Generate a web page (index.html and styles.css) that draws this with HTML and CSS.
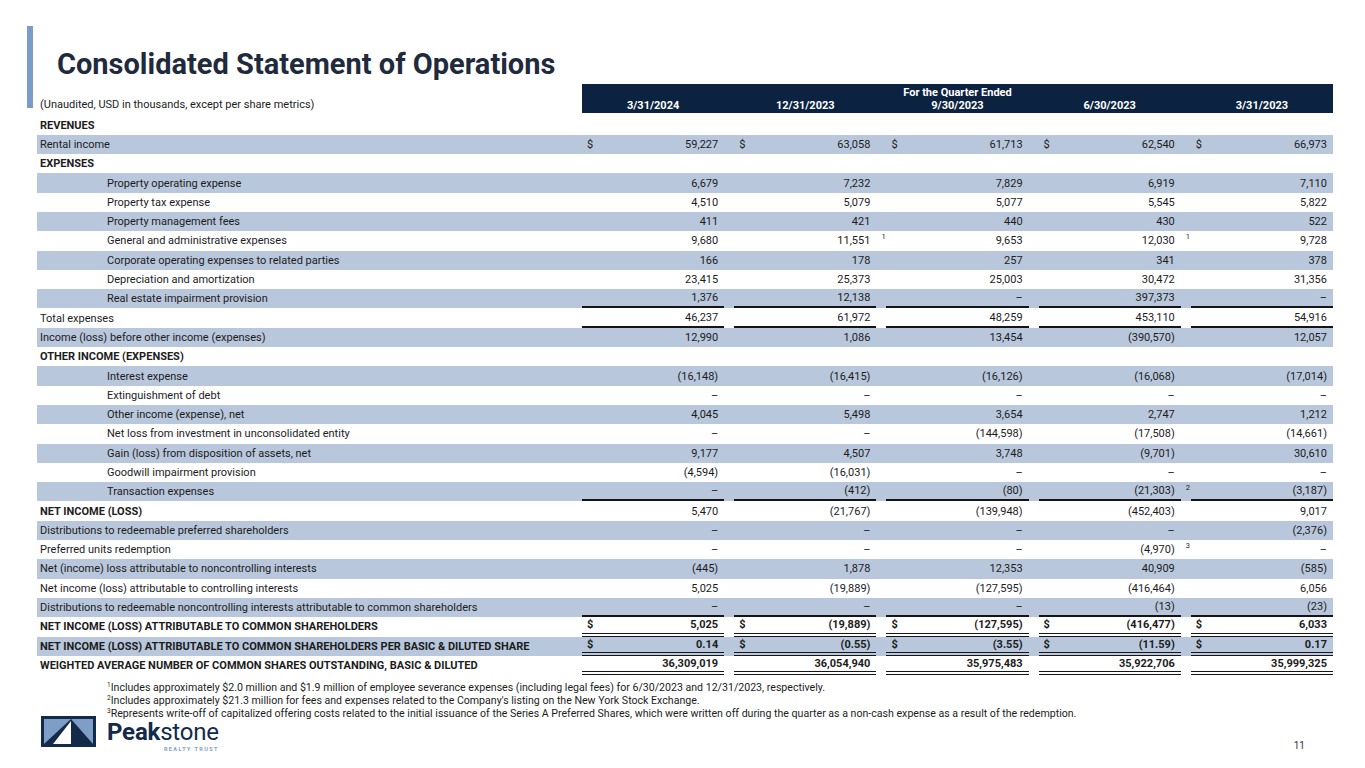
FILE: index.html
```html
<!DOCTYPE html>
<html lang="en">
<head>
<meta charset="utf-8">
<title>Consolidated Statement of Operations</title>
<link rel="stylesheet" href="styles.css">
</head>
<body>
<div class="slide">
  <h1 class="title">Consolidated Statement of Operations</h1>

  <div class="table">
    <div class="row head">
      <div class="label unaudited">(Unaudited, USD in thousands, except per share metrics)</div>
      <div class="headbar">
        <div class="qe">For the Quarter Ended</div>
        <div class="dates">
          <span>3/31/2024</span><span>12/31/2023</span><span>9/30/2023</span><span>6/30/2023</span><span>3/31/2023</span>
        </div>
      </div>
    </div>

    <div class="body">
      <div class="row"><div class="label sec">REVENUES</div></div>
      <div class="row band"><div class="label">Rental income</div>
        <div class="v d"><span>$</span><span>59,227</span></div><div class="v d"><span>$</span><span>63,058</span></div><div class="v d"><span>$</span><span>61,713</span></div><div class="v d"><span>$</span><span>62,540</span></div><div class="v d"><span>$</span><span>66,973</span></div></div>
      <div class="row"><div class="label sec">EXPENSES</div></div>
      <div class="row band"><div class="label ind">Property operating expense</div>
        <div class="v">6,679</div><div class="v">7,232</div><div class="v">7,829</div><div class="v">6,919</div><div class="v">7,110</div></div>
      <div class="row"><div class="label ind">Property tax expense</div>
        <div class="v">4,510</div><div class="v">5,079</div><div class="v">5,077</div><div class="v">5,545</div><div class="v">5,822</div></div>
      <div class="row band"><div class="label ind">Property management fees</div>
        <div class="v">411</div><div class="v">421</div><div class="v">440</div><div class="v">430</div><div class="v">522</div></div>
      <div class="row"><div class="label ind">General and administrative expenses</div>
        <div class="v">9,680</div><div class="v">11,551<span class="fn">1</span></div><div class="v">9,653</div><div class="v">12,030<span class="fn">1</span></div><div class="v">9,728</div></div>
      <div class="row band"><div class="label ind">Corporate operating expenses to related parties</div>
        <div class="v">166</div><div class="v">178</div><div class="v">257</div><div class="v">341</div><div class="v">378</div></div>
      <div class="row"><div class="label ind">Depreciation and amortization</div>
        <div class="v">23,415</div><div class="v">25,373</div><div class="v">25,003</div><div class="v">30,472</div><div class="v">31,356</div></div>
      <div class="row band ul"><div class="label ind">Real estate impairment provision</div>
        <div class="v">1,376</div><div class="v">12,138</div><div class="v">–</div><div class="v">397,373</div><div class="v">–</div></div>
      <div class="row ul"><div class="label">Total expenses</div>
        <div class="v">46,237</div><div class="v">61,972</div><div class="v">48,259</div><div class="v">453,110</div><div class="v">54,916</div></div>
      <div class="row band"><div class="label">Income (loss) before other income (expenses)</div>
        <div class="v">12,990</div><div class="v">1,086</div><div class="v">13,454</div><div class="v">(390,570)</div><div class="v">12,057</div></div>
      <div class="row"><div class="label sec">OTHER INCOME (EXPENSES)</div></div>
      <div class="row band"><div class="label ind">Interest expense</div>
        <div class="v">(16,148)</div><div class="v">(16,415)</div><div class="v">(16,126)</div><div class="v">(16,068)</div><div class="v">(17,014)</div></div>
      <div class="row"><div class="label ind">Extinguishment of debt</div>
        <div class="v">–</div><div class="v">–</div><div class="v">–</div><div class="v">–</div><div class="v">–</div></div>
      <div class="row band"><div class="label ind">Other income (expense), net</div>
        <div class="v">4,045</div><div class="v">5,498</div><div class="v">3,654</div><div class="v">2,747</div><div class="v">1,212</div></div>
      <div class="row"><div class="label ind">Net loss from investment in unconsolidated entity</div>
        <div class="v">–</div><div class="v">–</div><div class="v">(144,598)</div><div class="v">(17,508)</div><div class="v">(14,661)</div></div>
      <div class="row band"><div class="label ind">Gain (loss) from disposition of assets, net</div>
        <div class="v">9,177</div><div class="v">4,507</div><div class="v">3,748</div><div class="v">(9,701)</div><div class="v">30,610</div></div>
      <div class="row"><div class="label ind">Goodwill impairment provision</div>
        <div class="v">(4,594)</div><div class="v">(16,031)</div><div class="v">–</div><div class="v">–</div><div class="v">–</div></div>
      <div class="row band ul"><div class="label ind">Transaction expenses</div>
        <div class="v">–</div><div class="v">(412)</div><div class="v">(80)</div><div class="v">(21,303)<span class="fn">2</span></div><div class="v">(3,187)</div></div>
      <div class="row"><div class="label sec">NET INCOME (LOSS)</div>
        <div class="v">5,470</div><div class="v">(21,767)</div><div class="v">(139,948)</div><div class="v">(452,403)</div><div class="v">9,017</div></div>
      <div class="row band"><div class="label">Distributions to redeemable preferred shareholders</div>
        <div class="v">–</div><div class="v">–</div><div class="v">–</div><div class="v">–</div><div class="v">(2,376)</div></div>
      <div class="row"><div class="label">Preferred units redemption</div>
        <div class="v">–</div><div class="v">–</div><div class="v">–</div><div class="v">(4,970)<span class="fn">3</span></div><div class="v">–</div></div>
      <div class="row band"><div class="label">Net (income) loss attributable to noncontrolling interests</div>
        <div class="v">(445)</div><div class="v">1,878</div><div class="v">12,353</div><div class="v">40,909</div><div class="v">(585)</div></div>
      <div class="row"><div class="label">Net income (loss) attributable to controlling interests</div>
        <div class="v">5,025</div><div class="v">(19,889)</div><div class="v">(127,595)</div><div class="v">(416,464)</div><div class="v">6,056</div></div>
      <div class="row band ul"><div class="label">Distributions to redeemable noncontrolling interests attributable to common shareholders</div>
        <div class="v">–</div><div class="v">–</div><div class="v">–</div><div class="v">(13)</div><div class="v">(23)</div></div>
      <div class="row dbl strong"><div class="label sec">NET INCOME (LOSS) ATTRIBUTABLE TO COMMON SHAREHOLDERS</div>
        <div class="v d"><span>$</span><span>5,025</span></div><div class="v d"><span>$</span><span>(19,889)</span></div><div class="v d"><span>$</span><span>(127,595)</span></div><div class="v d"><span>$</span><span>(416,477)</span></div><div class="v d"><span>$</span><span>6,033</span></div></div>
      <div class="row band dbl strong"><div class="label sec">NET INCOME (LOSS) ATTRIBUTABLE TO COMMON SHAREHOLDERS PER BASIC &amp; DILUTED SHARE</div>
        <div class="v d"><span>$</span><span>0.14</span></div><div class="v d"><span>$</span><span>(0.55)</span></div><div class="v d"><span>$</span><span>(3.55)</span></div><div class="v d"><span>$</span><span>(11.59)</span></div><div class="v d"><span>$</span><span>0.17</span></div></div>
      <div class="row dbl strong"><div class="label sec">WEIGHTED AVERAGE NUMBER OF COMMON SHARES OUTSTANDING, BASIC &amp; DILUTED</div>
        <div class="v">36,309,019</div><div class="v">36,054,940</div><div class="v">35,975,483</div><div class="v">35,922,706</div><div class="v">35,999,325</div></div>
    </div>
  </div>

  <div class="notes">
    <p><sup>1</sup>Includes approximately $2.0 million and $1.9 million of employee severance expenses (including legal fees) for 6/30/2023 and 12/31/2023, respectively.</p>
    <p><sup>2</sup>Includes approximately $21.3 million for fees and expenses related to the Company's listing on the New York Stock Exchange.</p>
    <p><sup>3</sup>Represents write-off of capitalized offering costs related to the initial issuance of the Series A Preferred Shares, which were written off during the quarter as a non-cash expense as a result of the redemption.</p>
  </div>

  <div class="footer">
    <div class="logo">
      <svg class="mark" width="55" height="31" viewBox="0 0 55 31" aria-hidden="true">
        <rect x="0" y="0" width="55" height="31" fill="#132a4b"/>
        <rect x="3" y="3" width="49" height="25" fill="#7e9ec7"/>
        <polygon points="3,28 30,3 52,28" fill="#132a4b"/>
        <polygon points="12,28 30,5 30,28" fill="#ffffff"/>
      </svg>
      <div class="word">
        <div class="name"><b>Peak</b>stone</div>
        <div class="sub">REALTY TRUST</div>
      </div>
    </div>
    <div class="page">11</div>
  </div>
</div>
</body>
</html>
```

FILE: styles.css
```css
* { box-sizing: border-box; margin: 0; padding: 0; }

body {
  margin: 0;
  background: #ffffff;
  font-family: Roboto, "Liberation Sans", sans-serif;
  color: #1c1c1c;
}

.slide {
  position: relative;
  width: 1365px;
  height: 768px;
  overflow: hidden;
  display: flex;
  flex-direction: column;
}

.slide::before {
  content: "";
  position: absolute;
  left: 27px;
  top: 26px;
  width: 6px;
  height: 82px;
  background: #7b9cc6;
}

.title {
  margin: 47px 0 0 57px;
  font-size: 29px;
  line-height: 34px;
  font-weight: 700;
  color: #1f2b3d;
  white-space: nowrap;
}

.table {
  margin: 3px 0 0 37px;
  width: 1296px;
  font-size: 11px;
}

.row {
  display: grid;
  grid-template-columns: 535px repeat(5, 1fr);
  column-gap: 10px;
  height: 19.3px;
}

.row.band { background: #b8c7db; }

.head {
  height: 29px;
  margin-bottom: 2.5px;
}

.label {
  display: flex;
  align-items: center;
  padding-left: 3px;
  white-space: nowrap;
}

.label.ind { padding-left: 70px; }
.label.sec { font-weight: 700; }

.unaudited {
  align-items: flex-end;
  padding-bottom: 2px;
  line-height: 13px;
}

.headbar {
  grid-column: 2 / -1;
  background: #0c2241;
  color: #ffffff;
  font-weight: 700;
  padding-top: 2px;
  line-height: 13px;
  text-align: center;
}

.dates {
  display: grid;
  grid-template-columns: repeat(5, 1fr);
  column-gap: 10px;
}

.v {
  position: relative;
  display: flex;
  align-items: center;
  justify-content: flex-end;
  padding: 0 6px 0 5px;
  white-space: nowrap;
}

.v.d { justify-content: space-between; }

.ul .v { border-bottom: 2px solid #151515; }
.dbl .v { border-bottom: 4px double #151515; }
.strong .v { font-weight: 700; }

.fn {
  position: absolute;
  left: calc(100% + 5px);
  top: 1px;
  font-size: 7.5px;
  font-weight: 400;
}

.notes {
  margin: 6px 0 0 107px;
  font-size: 10.6px;
  line-height: 13px;
  white-space: nowrap;
}

.notes sup {
  font-size: 6.5px;
  vertical-align: 4px;
  line-height: 0;
}

.footer {
  margin-top: 0;
  display: flex;
  align-items: flex-start;
  padding-left: 41px;
  padding-right: 60px;
}

.logo {
  display: flex;
  align-items: flex-start;
  gap: 11px;
}

.mark {
  display: block;
  margin-top: -4.5px;
}

.word {
  display: flex;
  flex-direction: column;
  align-items: flex-end;
}

.name {
  font-size: 24px;
  line-height: 22px;
  height: 22px;
  color: #132a4b;
  letter-spacing: -0.2px;
  margin-top: 1px;
}

.name b { font-weight: 700; }

.sub {
  font-size: 5.5px;
  line-height: 7px;
  letter-spacing: 1.4px;
  color: #7e9ec7;
  font-weight: 700;
  margin-top: 3px;
}

.page {
  margin-left: auto;
  margin-top: 20px;
  font-size: 10px;
  color: #333333;
}
```
